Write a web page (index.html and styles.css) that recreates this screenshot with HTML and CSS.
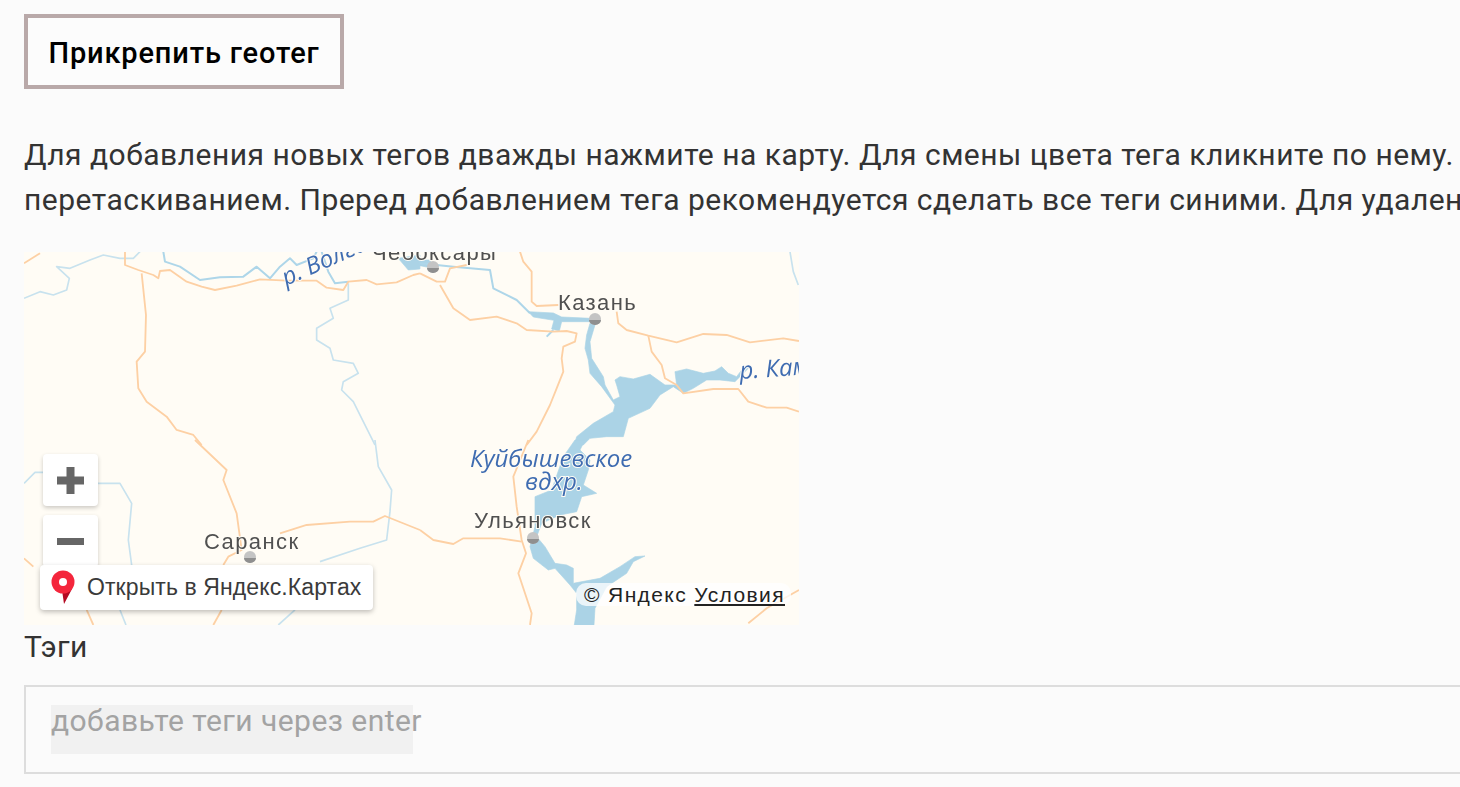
FILE: index.html
```html
<!DOCTYPE html>
<html lang="ru">
<head>
    <meta charset="UTF-8">
    <title>Прикрепить геотег</title>
    <link rel="stylesheet" href="styles.css">
</head>
<body>
    <div class="page">
        <button type="button" class="geo-button">Прикрепить геотег</button>

        <p class="hint">Для добавления новых тегов дважды нажмите на карту. Для смены цвета тега кликните по нему.<br>перетаскиванием. Преред добавлением тега рекомендуется сделать все теги синими. Для удаления</p>

        <div class="map">
            <svg class="map-svg" viewBox="24 252 775 373" width="775" height="373">
                <!-- verhnyaya chast karty -->
                <g transform="translate(20 245) scale(.3333)">
                    <path class="river-light" d="M12,160 60,140 100,150 140,135 148,100 110,65 150,70 210,45 250,30 300,40 340,40 360,20"/>
                    <path class="river-light" d="M985,115 985,165 930,190 940,220 890,250 890,285 930,310 940,345 1000,355 1015,385 970,410 965,435 1000,470 1030,530 1065,600"/>
                    <path class="river" d="M430,20 435,50 480,65 540,105 600,97 670,95 710,65 750,100 780,65 810,40 830,60 880,40 890,20"/>
                    <path class="river" d="M905,20 925,80 945,115 985,110"/>
                    <path class="water" d="M1135,40 1200,30 1200,72 1165,75z"/>
                    <path class="road" d="M12,55 60,25"/>
                    <path class="road" d="M315,20 315,60 355,75 400,90 415,100 420,78 450,75 500,110 545,125 585,135 650,122 720,103 800,107 890,107 920,128 970,135 985,110 1040,105 1070,118 1130,112 1180,90 1200,85"/>
                    <path class="road" d="M365,85 378,210 375,320 350,350 355,430 380,470 440,515 470,555 520,570 545,600"/>
                </g>
                <g transform="translate(420 245) scale(.3333)">
                    <path class="water" d="M0,45 30,45 40,70 0,62z"/>
                    <path class="river" d="M0,55 100,65 210,75 220,130 290,165 330,205"/>
                    <path class="water" d="M325,200 400,204 425,216 510,220 510,230 425,230 418,258 395,252 402,226 340,216z"/>
                    <path class="river" d="M400,255 380,275"/>
                    <path class="river-light" d="M1110,20 1120,80 1135,120"/>
                    <path class="water" d="M510,235 525,240 510,290 515,340 550,395 555,420 580,465 600,455 590,420 585,405 600,395 640,402 690,388 735,420 770,420 765,380 800,372 850,385 885,378 905,365 925,385 950,395 975,362 985,370 945,410 900,405 860,405 820,430 790,445 760,425 720,450 690,490 625,520 610,575 560,575 510,580 490,600 463,600 470,575 520,535 580,500 585,480 545,425 510,385 505,345 495,310 500,270z"/>
                    <path class="road" d="M0,85 50,110 75,110 90,70 140,60"/>
                    <path class="road" d="M60,120 100,190 150,225 230,215 290,235 320,255 400,260 440,258 470,265 465,290 430,305 425,340 430,380 410,430 390,480 350,560 320,600"/>
                    <path class="road" d="M300,20 310,50 335,80 335,170 350,183 415,180"/>
                    <path class="road" d="M590,200 595,235 620,255 685,272 770,292 850,267 920,270 990,292 1090,280 1137,288"/>
                    <path class="road" d="M685,272 695,320 725,360 735,400 770,420 790,445 880,432 955,432 985,470 1040,488 1100,488 1137,500"/>
                </g>
                <!-- nizhnyaya chast karty -->
                <g transform="translate(20 440) scale(.3333)">
                    <path class="river-light" d="M12,130 45,97 70,97 235,130 300,130 335,190 325,300 335,375"/>
                    <path class="river-light" d="M300,510 318,555"/>
                    <path class="river-light" d="M1065,0 1075,80 1115,150 1110,215 1100,300 1020,325 900,365"/>
                    <path class="river-light" d="M825,510 775,555"/>
                    <path class="road" d="M525,0 620,90 610,120 650,220 665,330 625,350 610,375"/>
                    <path class="road" d="M780,280 860,255 990,245 1060,245 1095,228 1200,270"/>
                    <path class="road" d="M200,510 220,555"/>
                    <path class="road" d="M605,510 580,555"/>
                    <path class="road" d="M12,355 40,380"/>
                </g>
                <g transform="translate(420 440) scale(.3333)">
                    <path class="water" d="M465,0 495,0 480,30 510,60 505,90 490,135 530,160 485,170 470,215 420,225 365,250 350,290 375,320 405,370 440,375 460,385 460,430 540,415 600,380 645,350 675,348 640,365 620,400 560,440 525,505 522,555 463,555 470,510 470,460 450,435 405,385 385,390 340,355 330,320 345,260 345,170 395,150 430,50z"/>
                    <path class="road" d="M325,0 280,110 290,200 305,300 318,340 295,400 335,520 330,555"/>
                    <path class="road" d="M0,270 40,300 100,312 130,295 240,295 305,305"/>
                    <path class="road" d="M985,550 1040,505 1137,450"/>
                </g>

                <g class="pin"><circle cx="433" cy="267" r="6"/><path d="M427,268h12a6,5 0 0 1-12,0z"/></g>
                <g class="pin"><circle cx="595" cy="319" r="6"/><path d="M589,320h12a6,5 0 0 1-12,0z"/></g>
                <g class="pin"><circle cx="533" cy="538" r="6"/><path d="M527,539h12a6,5 0 0 1-12,0z"/></g>
                <g class="pin"><circle cx="250" cy="557" r="6"/><path d="M244,558h12a6,5 0 0 1-12,0z"/></g>

                <text class="city" x="372" y="260">Чебоксары</text>
                <text class="city" x="558" y="310">Казань</text>
                <text class="city" x="474" y="528">Ульяновск</text>
                <text class="city" x="204" y="549">Саранск</text>
                <text class="water-label" transform="translate(286 286) rotate(-24)">р. Волга</text>
                <text class="water-label" transform="translate(740 379) rotate(-4)">р. Кама</text>
                <text class="water-label" x="470" y="467">Куйбышевское</text>
                <text class="water-label" x="525" y="490">вдхр.</text>
            </svg>

            <div class="zoom-btn zoom-plus">
                <svg width="27" height="27" viewBox="0 0 27 27"><path d="M9.500,0h8v9.500h9.500v8h-9.500v9.500h-8v-9.500H0v-8h9.500z"/></svg>
            </div>
            <div class="zoom-btn zoom-minus">
                <svg width="27" height="27" viewBox="0 0 27 27"><path d="M0,10h27v7H0z"/></svg>
            </div>
            <a class="open-link" href="#">
                <svg width="24" height="35" viewBox="0 0 24 35">
                    <path fill="#b40a22" d="M13,34 11,20 21,19z"/>
                    <circle cx="12" cy="12" r="11.500" fill="#f4263c"/>
                    <circle cx="12" cy="12" r="4" fill="#fff"/>
                </svg>
                <span>Открыть в Яндекс.Картах</span>
            </a>
            <div class="copyright">© Яндекс <a href="#">Условия</a></div>
        </div>

        <label class="tags-label" for="tags">Тэги</label>
        <div class="tags-box">
            <div class="tags-input" id="tags"><span>добавьте теги через enter</span></div>
        </div>
    </div>
</body>
</html>
```

FILE: styles.css
```css
html, body {
    margin: 0;
    height: 100%;
    overflow: hidden;
    background-color: #fbfbfb;
}
.page {
    width: 1800px;
    padding: 14px 0 0 24px;
    font-family: Roboto, sans-serif;
    color: #333;
}
.geo-button {
    display: block;
    width: 320px;
    height: 75px;
    padding: 3px 0 0;
    border: 4px solid #b9a9a9;
    background-color: #fcfcfc;
    color: #000;
    font-family: Roboto, sans-serif;
    font-size: 29px;
    font-weight: 500;
    letter-spacing: 0.85px;
}
.hint {
    margin: 43px 0 30px;
    font-size: 30px;
    letter-spacing: 0.49px;
    line-height: 45px;
    white-space: nowrap;
}
.map {
    position: relative;
    width: 775px;
    height: 373px;
    overflow: hidden;
    background-color: #fffcf5;
}
.map-svg {
    display: block;
    filter: blur(0.5px);
}
.road, .river, .river-light {
    fill: none;
    stroke-linejoin: round;
}
.road {
    stroke: #fdd0a4;
    stroke-width: 5.5;
}
.river {
    stroke: #aed6e9;
    stroke-width: 6;
}
.river-light {
    stroke: #c8e2ee;
    stroke-width: 5;
}
.water {
    fill: #abd3e6;
    stroke: #abd3e6;
    stroke-width: 2;
    stroke-linejoin: round;
}
.pin circle {
    fill: #c4c4c4;
}
.pin path {
    fill: #8f8f8f;
}
.city, .water-label {
    paint-order: stroke;
    stroke: #fffcf5;
    stroke-width: 2px;
}
.city {
    font-family: "Liberation Sans", sans-serif;
    font-size: 22px;
    fill: #505050;
    letter-spacing: 1.4px;
}
.water-label {
    font-family: "Open Sans", sans-serif;
    font-size: 24px;
    font-style: italic;
    fill: #3f6cb1;
}
.zoom-btn {
    position: absolute;
    left: 19px;
    width: 55px;
    height: 52px;
    display: flex;
    align-items: center;
    justify-content: center;
    background-color: #fff;
    border-radius: 4px;
    box-shadow: 0 2px 4px rgba(0, 0, 0, 0.2);
}
.zoom-btn svg {
    fill: #666;
}
.zoom-plus {
    top: 202px;
}
.zoom-minus {
    top: 263px;
}
.open-link {
    position: absolute;
    left: 16px;
    top: 313px;
    width: 333px;
    height: 45px;
    display: flex;
    align-items: center;
    gap: 12px;
    padding-left: 11px;
    box-sizing: border-box;
    background-color: #fff;
    border-radius: 4px;
    box-shadow: 0 2px 5px rgba(0, 0, 0, 0.25);
    color: #3a3a3a;
    font-family: "Liberation Sans", sans-serif;
    font-size: 23px;
    letter-spacing: 0.1px;
    text-decoration: none;
}
.copyright {
    position: absolute;
    right: 8px;
    top: 331px;
    padding: 0 6px 0 8px;
    line-height: 23px;
    border-radius: 10px;
    background-color: rgba(255, 255, 255, 0.75);
    color: #222;
    font-family: "Liberation Sans", sans-serif;
    font-size: 21px;
    letter-spacing: 1.4px;
}
.copyright a {
    color: #222;
}
.tags-label {
    display: block;
    height: 60px;
    font-size: 30px;
    letter-spacing: 0.45px;
    line-height: 44px;
}
.tags-box {
    box-sizing: border-box;
    height: 89px;
    padding: 18px 0 0 25px;
    border: 2px solid #ddd;
}
.tags-input {
    width: 362px;
    height: 49px;
    background-color: #f1f1f1;
    color: #a3a3a3;
    font-size: 30px;
    letter-spacing: 0.45px;
    line-height: 31px;
    white-space: nowrap;
}
```
